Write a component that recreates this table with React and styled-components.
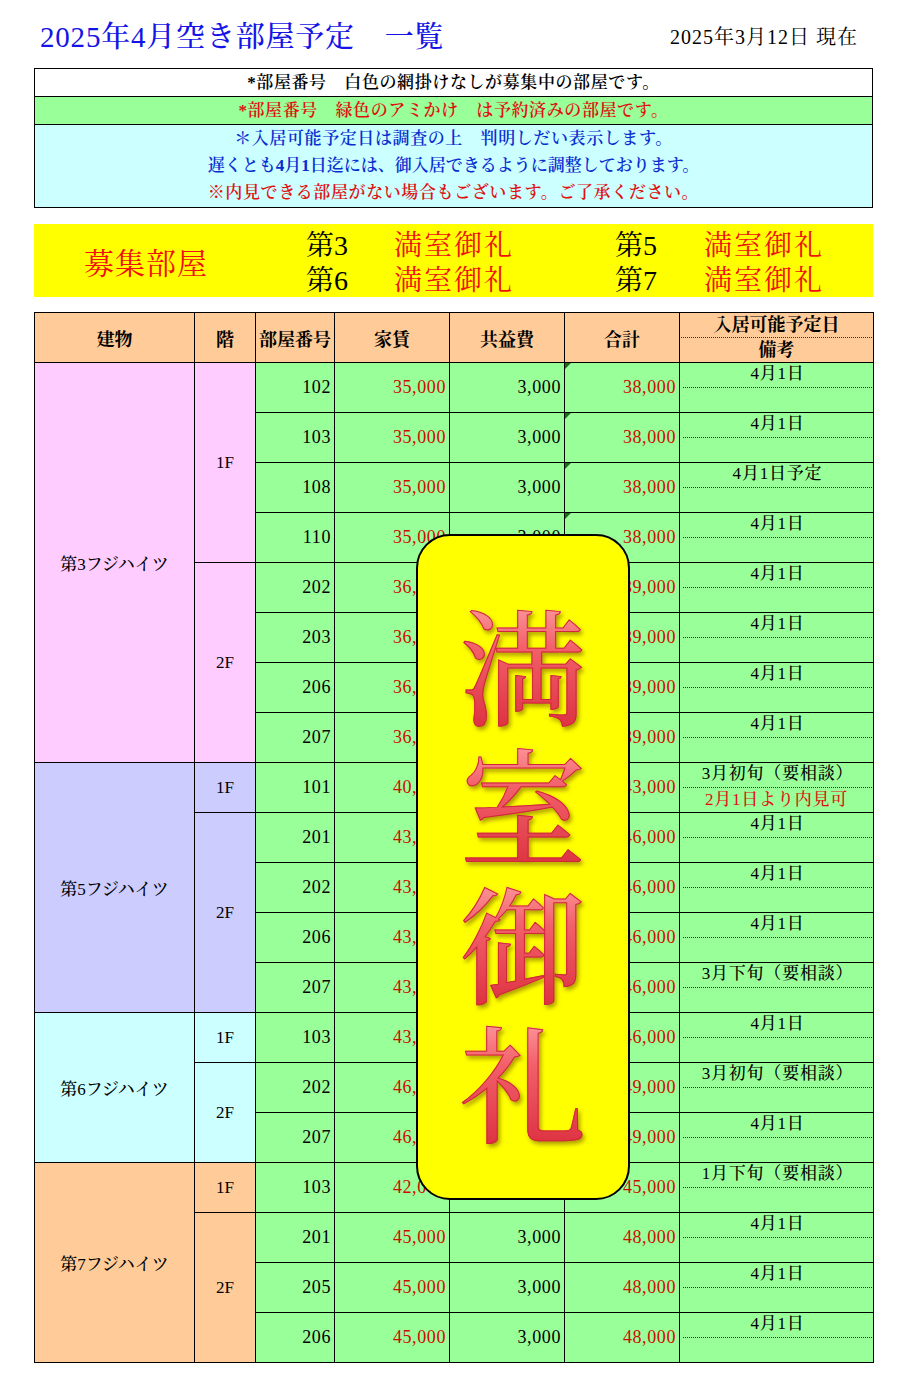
import React from "react";
import styled, { createGlobalStyle } from "styled-components";

const GlobalStyle = createGlobalStyle`
  body {
    margin: 0;
    background: #ffffff;
    font-family: "Liberation Serif", "Noto Serif CJK JP", "Noto Sans CJK JP", serif;
    color: #000;
  }
`;

const Page = styled.div`
  width: 908px;
  padding: 0 35px 26px 34px;
  box-sizing: border-box;
`;

const TitleRow = styled.div`
  height: 68px;
  box-sizing: border-box;
  display: flex;
  align-items: center;
  justify-content: space-between;
  padding: 6px 15px 0 6px;
`;

const Title = styled.h1`
  margin: 0;
  font-size: 29px;
  line-height: 34px;
  font-weight: 500;
  color: #1414e6;
  letter-spacing: 0.8px;
`;

const AsOf = styled.div`
  font-size: 20px;
  line-height: 24px;
  letter-spacing: 1px;
`;

const Notice = styled.div`
  border: 1px solid #000;
`;

const NoticeRow = styled.div`
  background: ${p => p.bg};
  border-bottom: ${p => (p.last ? "none" : "1px solid #000")};
  padding-bottom: ${p => (p.last ? "1px" : "0")};
`;

const NoticeLine = styled.div`
  height: 27px;
  line-height: 27px;
  text-align: center;
  font-size: 17px;
  font-weight: 600;
  letter-spacing: ${p => (p.wide ? "0.6px" : "0")};
  color: ${p => p.tone};
`;

const Banner = styled.div`
  margin-top: 16px;
  height: 73px;
  background: #ffff00;
  display: grid;
  grid-template-columns: 272px 88px 221px 89px 1fr;
  grid-template-rows: 35px 35px;
  align-content: center;
  align-items: center;
`;

const BannerLabel = styled.div`
  grid-row: span 2;
  padding-left: 50px;
  font-size: 30px;
  color: #f01010;
  letter-spacing: 1px;
`;

const BannerNo = styled.div`
  font-size: 28px;
`;

const BannerFull = styled.div`
  font-size: 28px;
  color: #f01010;
  letter-spacing: 2px;
`;

const TableWrap = styled.div`
  position: relative;
  margin-top: 15px;
`;

const Sheet = styled.table`
  width: 839px;
  border-collapse: collapse;
  table-layout: fixed;
  font-size: 18px;
`;

const HeadCell = styled.th`
  height: 49px;
  background: #ffcc99;
  border: 1px solid #000;
  font-weight: 700;
  font-size: 18px;
  padding: 0;
  text-align: center;
`;

const HeadSplit = styled.div`
  height: 24px;
  line-height: 24px;
  border-bottom: ${p => (p.top ? "1px dotted #333" : "none")};
  margin: 0 1px;
`;

const Row = styled.tr`
  height: 50px;
`;

const GroupCell = styled.td`
  background: ${p => p.bg};
  border: 1px solid #000;
  text-align: center;
  font-size: 17px;
  font-weight: 500;
  padding: 0;
`;

const NumCell = styled.td`
  position: relative;
  background: #99ff99;
  border: 1px solid #000;
  text-align: right;
  padding: 0 3px 0 0;
  color: ${p => (p.red ? "#cc0d00" : "#000")};
  letter-spacing: 0.6px;

  &::before {
    content: "";
    display: ${p => (p.mark ? "block" : "none")};
    position: absolute;
    left: 0;
    top: 0;
    border-top: 6px solid #1e6b1e;
    border-right: 6px solid transparent;
  }
`;

const DateCell = styled.td`
  background: #99ff99;
  border: 1px solid #000;
  padding: 0;
  text-align: center;
  font-size: 17px;
  font-weight: 500;
`;

const DateTop = styled.div`
  height: 24px;
  line-height: 22px;
  border-bottom: 1px dotted #333;
  margin: 0 1px 0 3px;
  letter-spacing: 0.8px;
`;

const DateBottom = styled.div`
  height: 24px;
  line-height: 24px;
  color: #e01010;
  letter-spacing: 0.8px;
`;

const Overlay = styled.div`
  position: absolute;
  left: 382px;
  top: 222px;
  width: 214px;
  height: 666px;
  box-sizing: border-box;
  background: #ffff00;
  border: 2px solid #000;
  border-radius: 34px;
  display: flex;
  flex-direction: column;
  align-items: center;
  padding-top: 56px;
  z-index: 2;
`;

const OverlayChar = styled.div`
  font-family: "Noto Serif CJK JP", "Noto Sans CJK JP", serif;
  font-size: 126px;
  line-height: 139px;
  font-weight: 500;
  background: linear-gradient(180deg, #ffa8a8 0%, #f2606a 40%, #dc3040 100%);
  -webkit-background-clip: text;
  background-clip: text;
  -webkit-text-fill-color: transparent;
  -webkit-text-stroke: 1px #d02838;
  filter: drop-shadow(2px 3px 2px rgba(110, 80, 0, 0.55));
`;

const r3 = (no, date = "4月1日") => ({ no, rent: "35,000", fee: "3,000", total: "38,000", date, mark: true });

const buildings = [
  {
    name: "第3フジハイツ",
    bg: "#ffccff",
    floors: [
      { floor: "1F", rooms: [r3("102"), r3("103"), r3("108", "4月1日予定"), r3("110")] },
      {
        floor: "2F",
        rooms: ["202", "203", "206", "207"].map(no => ({ no, rent: "36,000", fee: "3,000", total: "39,000", date: "4月1日" })),
      },
    ],
  },
  {
    name: "第5フジハイツ",
    bg: "#ccccff",
    floors: [
      { floor: "1F", rooms: [{ no: "101", rent: "40,000", fee: "3,000", total: "43,000", date: "3月初旬（要相談）", note: "2月1日より内見可" }] },
      {
        floor: "2F",
        rooms: [
          { no: "201", rent: "43,000", fee: "3,000", total: "46,000", date: "4月1日" },
          { no: "202", rent: "43,000", fee: "3,000", total: "46,000", date: "4月1日" },
          { no: "206", rent: "43,000", fee: "3,000", total: "46,000", date: "4月1日" },
          { no: "207", rent: "43,000", fee: "3,000", total: "46,000", date: "3月下旬（要相談）" },
        ],
      },
    ],
  },
  {
    name: "第6フジハイツ",
    bg: "#ccffff",
    floors: [
      { floor: "1F", rooms: [{ no: "103", rent: "43,000", fee: "3,000", total: "46,000", date: "4月1日" }] },
      {
        floor: "2F",
        rooms: [
          { no: "202", rent: "46,000", fee: "3,000", total: "49,000", date: "3月初旬（要相談）" },
          { no: "207", rent: "46,000", fee: "3,000", total: "49,000", date: "4月1日" },
        ],
      },
    ],
  },
  {
    name: "第7フジハイツ",
    bg: "#ffcc99",
    floors: [
      { floor: "1F", rooms: [{ no: "103", rent: "42,000", fee: "3,000", total: "45,000", date: "1月下旬（要相談）" }] },
      {
        floor: "2F",
        rooms: ["201", "205", "206"].map(no => ({ no, rent: "45,000", fee: "3,000", total: "48,000", date: "4月1日" })),
      },
    ],
  },
];

const App = () => {
  const rows = [];
  buildings.forEach(b => {
    const count = b.floors.reduce((n, f) => n + f.rooms.length, 0);
    b.floors.forEach((f, fi) => {
      f.rooms.forEach((r, ri) => {
        rows.push(
          <Row key={b.name + f.floor + r.no}>
            {fi === 0 && ri === 0 && (
              <GroupCell rowSpan={count} bg={b.bg}>{b.name}</GroupCell>
            )}
            {ri === 0 && (
              <GroupCell rowSpan={f.rooms.length} bg={b.bg}>{f.floor}</GroupCell>
            )}
            <NumCell>{r.no}</NumCell>
            <NumCell red>{r.rent}</NumCell>
            <NumCell>{r.fee}</NumCell>
            <NumCell red mark={r.mark}>{r.total}</NumCell>
            <DateCell>
              <DateTop>{r.date}</DateTop>
              <DateBottom>{r.note}</DateBottom>
            </DateCell>
          </Row>
        );
      });
    });
  });

  return (
    <Page>
      <GlobalStyle />
      <TitleRow>
        <Title>2025年4月空き部屋予定　一覧</Title>
        <AsOf>2025年3月12日 現在</AsOf>
      </TitleRow>

      <Notice>
        <NoticeRow bg="#ffffff">
          <NoticeLine tone="#000" wide>*部屋番号　白色の網掛けなしが募集中の部屋です。</NoticeLine>
        </NoticeRow>
        <NoticeRow bg="#99ff99">
          <NoticeLine tone="#e01010" wide>*部屋番号　緑色のアミかけ　は予約済みの部屋です。</NoticeLine>
        </NoticeRow>
        <NoticeRow bg="#ccffff" last>
          <NoticeLine tone="#0a2ed0" wide>＊入居可能予定日は調査の上　判明しだい表示します。</NoticeLine>
          <NoticeLine tone="#0a2ed0">遅くとも4月1日迄には、御入居できるように調整しております。</NoticeLine>
          <NoticeLine tone="#e01010" wide>※内見できる部屋がない場合もございます。ご了承ください。</NoticeLine>
        </NoticeRow>
      </Notice>

      <Banner>
        <BannerLabel>募集部屋</BannerLabel>
        <BannerNo>第3</BannerNo>
        <BannerFull>満室御礼</BannerFull>
        <BannerNo>第5</BannerNo>
        <BannerFull>満室御礼</BannerFull>
        <BannerNo>第6</BannerNo>
        <BannerFull>満室御礼</BannerFull>
        <BannerNo>第7</BannerNo>
        <BannerFull>満室御礼</BannerFull>
      </Banner>

      <TableWrap>
        <Sheet>
          <colgroup>
            <col style={{ width: 160 }} />
            <col style={{ width: 61 }} />
            <col style={{ width: 79 }} />
            <col style={{ width: 115 }} />
            <col style={{ width: 115 }} />
            <col style={{ width: 115 }} />
            <col style={{ width: 194 }} />
          </colgroup>
          <thead>
            <tr>
              <HeadCell>建物</HeadCell>
              <HeadCell>階</HeadCell>
              <HeadCell>部屋番号</HeadCell>
              <HeadCell>家賃</HeadCell>
              <HeadCell>共益費</HeadCell>
              <HeadCell>合計</HeadCell>
              <HeadCell>
                <HeadSplit top>入居可能予定日</HeadSplit>
                <HeadSplit>備考</HeadSplit>
              </HeadCell>
            </tr>
          </thead>
          <tbody>{rows}</tbody>
        </Sheet>
        <Overlay>
          {"満室御礼".split("").map(c => (
            <OverlayChar key={c}>{c}</OverlayChar>
          ))}
        </Overlay>
      </TableWrap>
    </Page>
  );
};

export default App;
